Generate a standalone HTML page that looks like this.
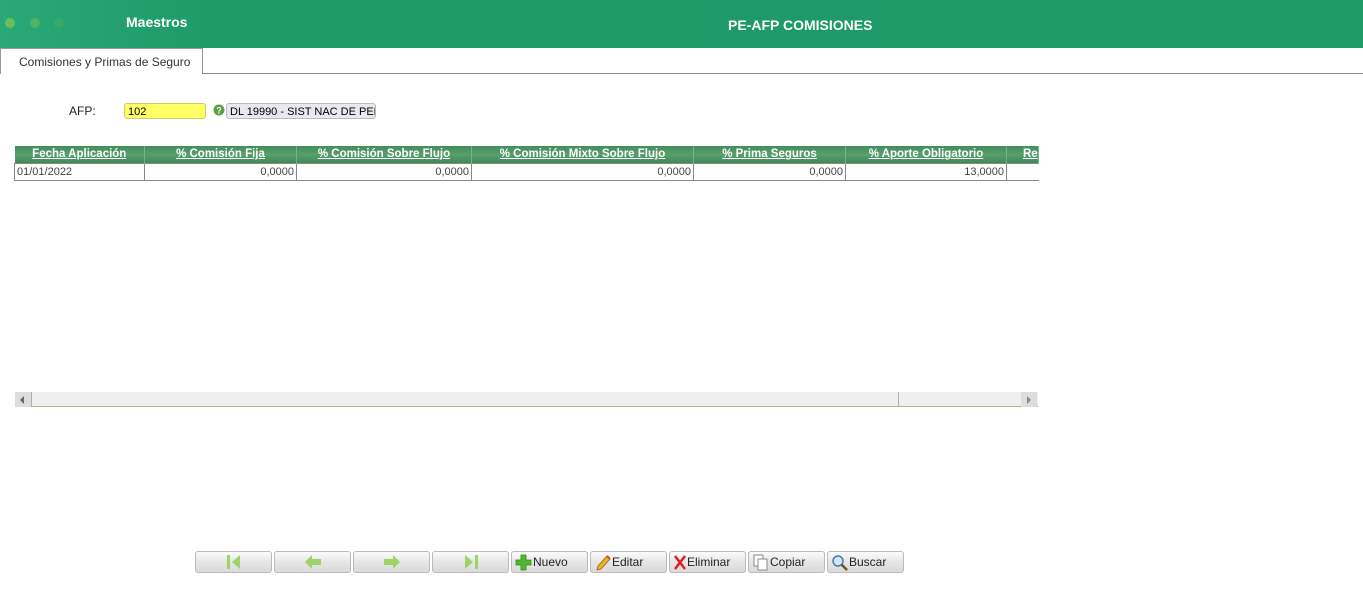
<!DOCTYPE html>
<html><head><meta charset="utf-8"><style>
*{margin:0;padding:0;box-sizing:border-box}
body{width:1363px;height:595px;background:#fff;position:relative;overflow:hidden;font-family:"Liberation Sans",sans-serif}
.hdr{position:absolute;left:0;top:0;width:1363px;height:48px;background:linear-gradient(90deg,#2aa877 0,#1f9b68 200px,#1e9a67 100%)}
.dot{position:absolute;top:18px;width:10px;height:10px;border-radius:50%}
.ttl{position:absolute;color:#fff;font-family:"Liberation Sans",sans-serif;font-weight:bold;font-size:14px}
.tab{position:absolute;left:0;top:48px;width:203px;height:26px;border:1px solid #999;border-bottom:none;background:#fff;font-size:12px;color:#333;padding:6px 0 0 18px;font-family:"Liberation Sans",sans-serif}
.tabline{position:absolute;left:202px;top:73px;width:1161px;height:1px;background:#888}
.lbl{position:absolute;left:69px;top:104px;font-size:12px;font-family:"Liberation Sans",sans-serif;color:#222}
.in{position:absolute;top:103px;height:16px;font-size:11px;font-family:"Liberation Sans",sans-serif;padding:2px 3px;border:1px solid #bbb;border-radius:3px}
table{position:absolute;left:14px;top:146px;border-collapse:collapse;font-size:11px;font-family:"Liberation Sans",sans-serif;table-layout:fixed}
th{background:linear-gradient(#3f8f5a,#5a9e6d 50%,#3e8a57);color:#fff;height:17px;text-decoration:underline;font-weight:bold;font-size:11.5px;border-right:1px solid #7fb08d;white-space:nowrap;overflow:hidden;padding:0}
td{height:17px;border:1px solid #888;color:#444;text-align:right;padding:0 2px;white-space:nowrap}
.sb{position:absolute;left:15px;top:392px;width:1023px;height:15px;background:#efefef;border-bottom:1px solid #a8b890}
.btn{position:absolute;top:551px;width:77px;height:22px;border:1px solid #bbb;border-radius:3px;background:linear-gradient(#fbfbfb,#e6e6e6 50%,#dadada);font-family:"Liberation Sans",sans-serif;font-size:12px;color:#222;display:flex;align-items:center;justify-content:center}
.btn.t{justify-content:flex-start;padding-left:3px}
</style></head><body>
<div class="hdr">
<div class="dot" style="left:5px;background:#7cc45a;opacity:.8"></div>
<div class="dot" style="left:30px;background:#6cbc5c;opacity:.6"></div>
<div class="dot" style="left:54px;background:#4cae5e;opacity:.5"></div>
<div class="ttl" style="left:126px;top:14px">Maestros</div>
<div class="ttl" style="left:728px;top:17px">PE-AFP COMISIONES</div>
</div>
<div class="tab">Comisiones y Primas de Seguro</div>
<div class="tabline"></div>
<div class="lbl">AFP:</div>
<div class="in" style="left:124px;width:82px;background:#ffff66;border-color:#cccc66">102</div>
<svg style="position:absolute;left:213px;top:104px" width="12" height="12"><circle cx="6" cy="6" r="5.5" fill="#5a9e45"/><text x="6" y="9.5" font-size="9" font-weight="bold" fill="#fff" text-anchor="middle" font-family="Liberation Sans">?</text></svg>
<div class="in" style="left:226px;width:150px;background:#e8e8f0;overflow:hidden;white-space:nowrap">DL 19990 - SIST NAC DE PEN</div>
<table>
<colgroup><col style="width:130px"><col style="width:152px"><col style="width:175px"><col style="width:222px"><col style="width:152px"><col style="width:161px"><col style="width:32px"></colgroup>
<tr><th>Fecha Aplicación</th><th>% Comisión Fija</th><th>% Comisión Sobre Flujo</th><th>% Comisión Mixto Sobre Flujo</th><th>% Prima Seguros</th><th>% Aporte Obligatorio</th><th style="text-align:left;padding-left:16px">Re</th></tr>
<tr><td style="text-align:left">01/01/2022</td><td>0,0000</td><td>0,0000</td><td>0,0000</td><td>0,0000</td><td>13,0000</td><td style="border-right:none"></td></tr>
</table>
<div class="sb">
<div style="position:absolute;left:0;top:0;width:16px;height:15px;background:#ddd"></div>
<div style="position:absolute;left:5px;top:4px;border:4px solid transparent;border-right:4px solid #666;border-left:none"></div>
<div style="position:absolute;left:16px;top:0;width:868px;height:15px;border-right:1px solid #a8b890;border-left:1px solid #a8b890"></div>
<div style="position:absolute;left:1006px;top:0;width:16px;height:15px;background:#ddd"></div>
<div style="position:absolute;left:1012px;top:4px;border:4px solid transparent;border-left:4px solid #888;border-right:none"></div>
</div>
<div class="btn" style="left:195px"><svg width="18" height="16"><rect x="2" y="1" width="3" height="14" fill="#9ed36a"/><path d="M15 1 L7 8 L15 15 Z" fill="#9ed36a"/></svg></div>
<div class="btn" style="left:274px"><svg width="18" height="16"><path d="M1 8 L8 1 L8 5 L17 5 L17 11 L8 11 L8 15 Z" fill="#9ed36a"/></svg></div>
<div class="btn" style="left:353px"><svg width="18" height="16"><path d="M17 8 L10 1 L10 5 L1 5 L1 11 L10 11 L10 15 Z" fill="#9ed36a"/></svg></div>
<div class="btn" style="left:432px"><svg width="18" height="16"><path d="M3 1 L11 8 L3 15 Z" fill="#9ed36a"/><rect x="13" y="1" width="3" height="14" fill="#9ed36a"/></svg></div>
<div class="btn t" style="left:511px"><svg width="18" height="17"><path d="M6 1h5v5h5v5h-5v5h-5v-5h-5v-5h5z" fill="#4fb82f" stroke="#2e8a1a" stroke-width=".8"/></svg>Nuevo</div>
<div class="btn t" style="left:590px"><svg width="18" height="17"><path d="M3 16 L4 12 L13 2 L16 5 L7 15 Z" fill="#f0b030" stroke="#a06010" stroke-width=".8"/><path d="M13 2 L16 5" stroke="#e04040" stroke-width="2"/></svg>Editar</div>
<div class="btn t" style="left:669px"><svg width="14" height="17"><path d="M2 2 L12 15 M12 2 L2 15" stroke="#e02020" stroke-width="2.5"/></svg>Eliminar</div>
<div class="btn t" style="left:748px"><svg width="18" height="17"><rect x="2" y="1" width="9" height="11" fill="#fff" stroke="#888"/><rect x="6" y="5" width="9" height="11" fill="#fff" stroke="#888"/></svg>Copiar</div>
<div class="btn t" style="left:827px"><svg width="18" height="17"><circle cx="7" cy="7" r="5" fill="#cde6f8" stroke="#4a7ab0" stroke-width="1.5"/><path d="M10.5 10.5 L16 16" stroke="#705030" stroke-width="2.5"/></svg>Buscar</div>
</body></html>
